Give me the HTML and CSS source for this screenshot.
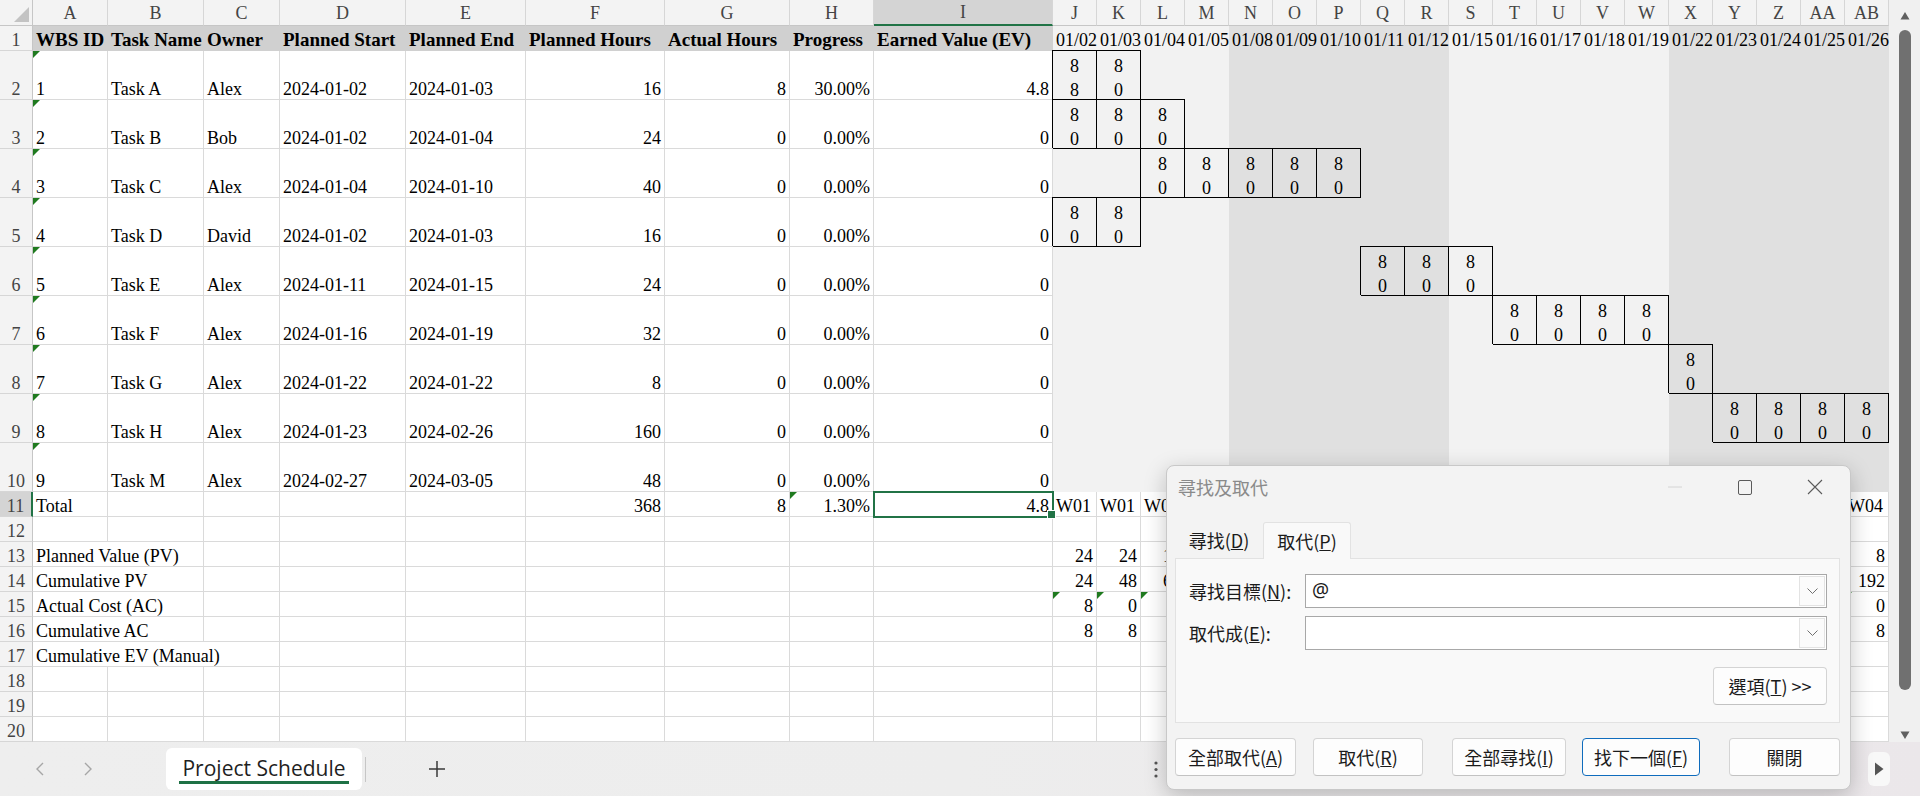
FILE: index.html
```html
<!DOCTYPE html>
<html lang="zh-Hant">
<head>
<meta charset="utf-8">
<title>Project Schedule</title>
<link rel="stylesheet" href="styles.css">
</head>
<body>
<div class="main">
  <div class="sheet">
    <!-- column headers -->
    <span class="corner"></span>
    <span class="ch">A</span><span class="ch">B</span><span class="ch">C</span><span class="ch">D</span><span class="ch">E</span><span class="ch">F</span><span class="ch">G</span><span class="ch">H</span><span class="ch sel">I</span>
    <span class="ch">J</span><span class="ch">K</span><span class="ch">L</span><span class="ch">M</span><span class="ch">N</span><span class="ch">O</span><span class="ch">P</span><span class="ch">Q</span><span class="ch">R</span><span class="ch">S</span><span class="ch">T</span><span class="ch">U</span><span class="ch">V</span><span class="ch">W</span><span class="ch">X</span><span class="ch">Y</span><span class="ch">Z</span><span class="ch">AA</span><span class="ch">AB</span>

    <!-- row 1 -->
    <span class="rh">1</span>
    <span class="hd">WBS ID</span><span class="hd">Task Name</span><span class="hd">Owner</span><span class="hd">Planned Start</span><span class="hd">Planned End</span><span class="hd">Planned Hours</span><span class="hd">Actual Hours</span><span class="hd">Progress</span><span class="hd">Earned Value (EV)</span>
    <span class="wa">01/02</span><span class="wa">01/03</span><span class="wa">01/04</span><span class="wa">01/05</span>
    <span class="wb">01/08</span><span class="wb">01/09</span><span class="wb">01/10</span><span class="wb">01/11</span><span class="wb">01/12</span>
    <span class="wa">01/15</span><span class="wa">01/16</span><span class="wa">01/17</span><span class="wa">01/18</span><span class="wa">01/19</span>
    <span class="wb">01/22</span><span class="wb">01/23</span><span class="wb">01/24</span><span class="wb">01/25</span><span class="wb">01/26</span>

    <!-- row 2 -->
    <span class="rh">2</span>
    <span class="err">1</span><span>Task A</span><span>Alex</span><span>2024-01-02</span><span>2024-01-03</span><span class="num">16</span><span class="num">8</span><span class="num">30.00%</span><span class="num">4.8</span>
    <span class="wa g"><span class="v">8<br>8</span></span><span class="wa g"><span class="v">8<br>0</span></span><span class="wa"></span><span class="wa"></span>
    <span class="wb"></span><span class="wb"></span><span class="wb"></span><span class="wb"></span><span class="wb"></span>
    <span class="wa"></span><span class="wa"></span><span class="wa"></span><span class="wa"></span><span class="wa"></span>
    <span class="wb"></span><span class="wb"></span><span class="wb"></span><span class="wb"></span><span class="wb"></span>

    <!-- row 3 -->
    <span class="rh">3</span>
    <span class="err">2</span><span>Task B</span><span>Bob</span><span>2024-01-02</span><span>2024-01-04</span><span class="num">24</span><span class="num">0</span><span class="num">0.00%</span><span class="num">0</span>
    <span class="wa g"><span class="v">8<br>0</span></span><span class="wa g"><span class="v">8<br>0</span></span><span class="wa g"><span class="v">8<br>0</span></span><span class="wa"></span>
    <span class="wb"></span><span class="wb"></span><span class="wb"></span><span class="wb"></span><span class="wb"></span>
    <span class="wa"></span><span class="wa"></span><span class="wa"></span><span class="wa"></span><span class="wa"></span>
    <span class="wb"></span><span class="wb"></span><span class="wb"></span><span class="wb"></span><span class="wb"></span>

    <!-- row 4 -->
    <span class="rh">4</span>
    <span class="err">3</span><span>Task C</span><span>Alex</span><span>2024-01-04</span><span>2024-01-10</span><span class="num">40</span><span class="num">0</span><span class="num">0.00%</span><span class="num">0</span>
    <span class="wa"></span><span class="wa"></span><span class="wa g"><span class="v">8<br>0</span></span><span class="wa g"><span class="v">8<br>0</span></span>
    <span class="wb g"><span class="v">8<br>0</span></span><span class="wb g"><span class="v">8<br>0</span></span><span class="wb g"><span class="v">8<br>0</span></span><span class="wb"></span><span class="wb"></span>
    <span class="wa"></span><span class="wa"></span><span class="wa"></span><span class="wa"></span><span class="wa"></span>
    <span class="wb"></span><span class="wb"></span><span class="wb"></span><span class="wb"></span><span class="wb"></span>

    <!-- row 5 -->
    <span class="rh">5</span>
    <span class="err">4</span><span>Task D</span><span>David</span><span>2024-01-02</span><span>2024-01-03</span><span class="num">16</span><span class="num">0</span><span class="num">0.00%</span><span class="num">0</span>
    <span class="wa g"><span class="v">8<br>0</span></span><span class="wa g"><span class="v">8<br>0</span></span><span class="wa"></span><span class="wa"></span>
    <span class="wb"></span><span class="wb"></span><span class="wb"></span><span class="wb"></span><span class="wb"></span>
    <span class="wa"></span><span class="wa"></span><span class="wa"></span><span class="wa"></span><span class="wa"></span>
    <span class="wb"></span><span class="wb"></span><span class="wb"></span><span class="wb"></span><span class="wb"></span>

    <!-- row 6 -->
    <span class="rh">6</span>
    <span class="err">5</span><span>Task E</span><span>Alex</span><span>2024-01-11</span><span>2024-01-15</span><span class="num">24</span><span class="num">0</span><span class="num">0.00%</span><span class="num">0</span>
    <span class="wa"></span><span class="wa"></span><span class="wa"></span><span class="wa"></span>
    <span class="wb"></span><span class="wb"></span><span class="wb"></span><span class="wb g"><span class="v">8<br>0</span></span><span class="wb g"><span class="v">8<br>0</span></span>
    <span class="wa g"><span class="v">8<br>0</span></span><span class="wa"></span><span class="wa"></span><span class="wa"></span><span class="wa"></span>
    <span class="wb"></span><span class="wb"></span><span class="wb"></span><span class="wb"></span><span class="wb"></span>

    <!-- row 7 -->
    <span class="rh">7</span>
    <span class="err">6</span><span>Task F</span><span>Alex</span><span>2024-01-16</span><span>2024-01-19</span><span class="num">32</span><span class="num">0</span><span class="num">0.00%</span><span class="num">0</span>
    <span class="wa"></span><span class="wa"></span><span class="wa"></span><span class="wa"></span>
    <span class="wb"></span><span class="wb"></span><span class="wb"></span><span class="wb"></span><span class="wb"></span>
    <span class="wa"></span><span class="wa g"><span class="v">8<br>0</span></span><span class="wa g"><span class="v">8<br>0</span></span><span class="wa g"><span class="v">8<br>0</span></span><span class="wa g"><span class="v">8<br>0</span></span>
    <span class="wb"></span><span class="wb"></span><span class="wb"></span><span class="wb"></span><span class="wb"></span>

    <!-- row 8 -->
    <span class="rh">8</span>
    <span class="err">7</span><span>Task G</span><span>Alex</span><span>2024-01-22</span><span>2024-01-22</span><span class="num">8</span><span class="num">0</span><span class="num">0.00%</span><span class="num">0</span>
    <span class="wa"></span><span class="wa"></span><span class="wa"></span><span class="wa"></span>
    <span class="wb"></span><span class="wb"></span><span class="wb"></span><span class="wb"></span><span class="wb"></span>
    <span class="wa"></span><span class="wa"></span><span class="wa"></span><span class="wa"></span><span class="wa"></span>
    <span class="wb g"><span class="v">8<br>0</span></span><span class="wb"></span><span class="wb"></span><span class="wb"></span><span class="wb"></span>

    <!-- row 9 -->
    <span class="rh">9</span>
    <span class="err">8</span><span>Task H</span><span>Alex</span><span>2024-01-23</span><span>2024-02-26</span><span class="num">160</span><span class="num">0</span><span class="num">0.00%</span><span class="num">0</span>
    <span class="wa"></span><span class="wa"></span><span class="wa"></span><span class="wa"></span>
    <span class="wb"></span><span class="wb"></span><span class="wb"></span><span class="wb"></span><span class="wb"></span>
    <span class="wa"></span><span class="wa"></span><span class="wa"></span><span class="wa"></span><span class="wa"></span>
    <span class="wb"></span><span class="wb g"><span class="v">8<br>0</span></span><span class="wb g"><span class="v">8<br>0</span></span><span class="wb g"><span class="v">8<br>0</span></span><span class="wb g"><span class="v">8<br>0</span></span>

    <!-- row 10 -->
    <span class="rh">10</span>
    <span class="err">9</span><span>Task M</span><span>Alex</span><span>2024-02-27</span><span>2024-03-05</span><span class="num">48</span><span class="num">0</span><span class="num">0.00%</span><span class="num">0</span>
    <span class="wa"></span><span class="wa"></span><span class="wa"></span><span class="wa"></span>
    <span class="wb"></span><span class="wb"></span><span class="wb"></span><span class="wb"></span><span class="wb"></span>
    <span class="wa"></span><span class="wa"></span><span class="wa"></span><span class="wa"></span><span class="wa"></span>
    <span class="wb"></span><span class="wb"></span><span class="wb"></span><span class="wb"></span><span class="wb"></span>

    <!-- row 11 (cells M..AA lie under the dialog) -->
    <span class="rh sel">11</span>
    <span>Total</span><span></span><span></span><span></span><span></span><span class="num">368</span><span class="num">8</span><span class="num err">1.30%</span><span class="num cur">4.8</span>
    <span>W01</span><span>W01</span><span>W01</span><span></span>
    <span></span><span></span><span></span><span></span><span></span>
    <span></span><span></span><span></span><span></span><span></span>
    <span></span><span></span><span></span><span></span><span>W04</span>

    <!-- row 12 -->
    <span class="rh">12</span>
    <span></span><span></span><span></span><span></span><span></span><span></span><span></span><span></span><span></span>
    <span></span><span></span><span></span><span></span><span></span><span></span><span></span><span></span><span></span><span></span>
    <span></span><span></span><span></span><span></span><span></span><span></span><span></span><span></span><span></span>

    <!-- row 13 -->
    <span class="rh">13</span>
    <span class="s2">Planned Value (PV)</span><span></span><span></span><span></span><span></span><span></span><span></span><span></span>
    <span class="num">24</span><span class="num">24</span><span class="num">16</span><span></span><span></span><span></span><span></span><span></span><span></span><span></span>
    <span></span><span></span><span></span><span></span><span></span><span></span><span></span><span></span><span class="num">8</span>

    <!-- row 14 -->
    <span class="rh">14</span>
    <span class="s2">Cumulative PV</span><span></span><span></span><span></span><span></span><span></span><span></span><span></span>
    <span class="num">24</span><span class="num">48</span><span class="num">64</span><span></span><span></span><span></span><span></span><span></span><span></span><span></span>
    <span></span><span></span><span></span><span></span><span></span><span></span><span></span><span></span><span class="num">192</span>

    <!-- row 15 -->
    <span class="rh">15</span>
    <span class="s2">Actual Cost (AC)</span><span></span><span></span><span></span><span></span><span></span><span></span><span></span>
    <span class="num err">8</span><span class="num err">0</span><span class="num err">0</span><span class="err"></span><span class="err"></span><span class="err"></span><span class="err"></span><span class="err"></span><span class="err"></span><span class="err"></span>
    <span class="err"></span><span class="err"></span><span class="err"></span><span class="err"></span><span class="err"></span><span class="err"></span><span class="err"></span><span class="err"></span><span class="num err">0</span>

    <!-- row 16 -->
    <span class="rh">16</span>
    <span class="s2">Cumulative AC</span><span></span><span></span><span></span><span></span><span></span><span></span><span></span>
    <span class="num">8</span><span class="num">8</span><span class="num">8</span><span></span><span></span><span></span><span></span><span></span><span></span><span></span>
    <span></span><span></span><span></span><span></span><span></span><span></span><span></span><span></span><span class="num">8</span>

    <!-- row 17 -->
    <span class="rh">17</span>
    <span class="s3">Cumulative EV (Manual)</span><span></span><span></span><span></span><span></span><span></span><span></span>
    <span></span><span></span><span></span><span></span><span></span><span></span><span></span><span></span><span></span><span></span>
    <span></span><span></span><span></span><span></span><span></span><span></span><span></span><span></span><span></span>

    <!-- row 18 -->
    <span class="rh">18</span>
    <span></span><span></span><span></span><span></span><span></span><span></span><span></span><span></span><span></span>
    <span></span><span></span><span></span><span></span><span></span><span></span><span></span><span></span><span></span><span></span>
    <span></span><span></span><span></span><span></span><span></span><span></span><span></span><span></span><span></span>

    <!-- row 19 -->
    <span class="rh">19</span>
    <span></span><span></span><span></span><span></span><span></span><span></span><span></span><span></span><span></span>
    <span></span><span></span><span></span><span></span><span></span><span></span><span></span><span></span><span></span><span></span>
    <span></span><span></span><span></span><span></span><span></span><span></span><span></span><span></span><span></span>

    <!-- row 20 -->
    <span class="rh">20</span>
    <span></span><span></span><span></span><span></span><span></span><span></span><span></span><span></span><span></span>
    <span></span><span></span><span></span><span></span><span></span><span></span><span></span><span></span><span></span><span></span>
    <span></span><span></span><span></span><span></span><span></span><span></span><span></span><span></span><span></span>
  </div>

  <div class="vscroll">
    <svg class="vs-up" width="10" height="9" viewBox="0 0 10 9"><path d="M5 1 L9.5 8.5 L0.5 8.5 Z" fill="#606060"/></svg>
    <div class="vs-thumb"></div>
    <svg class="vs-down" width="10" height="9" viewBox="0 0 10 9"><path d="M0.5 0.5 L9.5 0.5 L5 8 Z" fill="#606060"/></svg>
  </div>
</div>

<div class="tabbar">
  <span class="nav prev"><svg width="10" height="14" viewBox="0 0 10 14"><path d="M8 1 L2 7 L8 13" fill="none" stroke="#a6a6a6" stroke-width="1.4"/></svg></span>
  <span class="nav next"><svg width="10" height="14" viewBox="0 0 10 14"><path d="M2 1 L8 7 L2 13" fill="none" stroke="#a6a6a6" stroke-width="1.4"/></svg></span>
  <div class="sheet-tab"><span class="tab-label">Project Schedule</span></div>
  <span class="tabsep"></span>
  <span class="add"><svg width="18" height="18" viewBox="0 0 18 18"><path d="M9 1 V17 M1 9 H17" stroke="#3a3a3a" stroke-width="1.5"/></svg></span>
  <span class="more"><svg width="4" height="17" viewBox="0 0 4 17"><circle cx="2" cy="2" r="1.6" fill="#555"/><circle cx="2" cy="8.5" r="1.6" fill="#555"/><circle cx="2" cy="15" r="1.6" fill="#555"/></svg></span>
  <span class="hs-end"><svg width="10" height="14" viewBox="0 0 10 14"><path d="M1 0.5 L9.5 7 L1 13.5 Z" fill="#555"/></svg></span>
</div>

<div class="dialog">
  <div class="dlg-title">
    <span class="dlg-name">尋找及取代</span>
    <div class="dlg-ctrls">
      <span class="ctl"><svg width="14" height="2" viewBox="0 0 14 2"><path d="M0 1 H14" stroke="#d4d4d4" stroke-width="1"/></svg></span>
      <span class="ctl"><svg width="14" height="15" viewBox="0 0 14 15"><rect x="0.5" y="0.5" width="13" height="14" rx="1.5" fill="none" stroke="#5a5a5a" stroke-width="1"/></svg></span>
      <span class="ctl"><svg width="16" height="16" viewBox="0 0 16 16"><path d="M1 1 L15 15 M15 1 L1 15" stroke="#5a5a5a" stroke-width="1.1"/></svg></span>
    </div>
  </div>
  <div class="tabs">
    <span class="tab">尋找(<u>D</u>)</span>
    <span class="tab active">取代(<u>P</u>)</span>
  </div>
  <div class="panel">
    <div class="field">
      <label class="flabel">尋找目標(<u>N</u>):</label>
      <div class="combo"><span class="val">@</span><span class="drop"><svg width="11" height="6" viewBox="0 0 11 6"><path d="M0.5 0.5 L5.5 5.5 L10.5 0.5" fill="none" stroke="#707070" stroke-width="1"/></svg></span></div>
    </div>
    <div class="field f2">
      <label class="flabel">取代成(<u>E</u>):</label>
      <div class="combo"><span class="val"></span><span class="drop"><svg width="11" height="6" viewBox="0 0 11 6"><path d="M0.5 0.5 L5.5 5.5 L10.5 0.5" fill="none" stroke="#707070" stroke-width="1"/></svg></span></div>
    </div>
    <div class="opt-row"><button class="btn opt">選項(<u>T</u>) &gt;&gt;</button></div>
  </div>
  <div class="btns">
    <button class="btn b1">全部取代(<u>A</u>)</button>
    <button class="btn b2">取代(<u>R</u>)</button>
    <button class="btn b3">全部尋找(<u>I</u>)</button>
    <button class="btn b4 primary">找下一個(<u>F</u>)</button>
    <button class="btn b5">關閉</button>
  </div>
</div>
</body>
</html>
```

FILE: styles.css
```css
* { box-sizing: border-box; }
html, body { margin: 0; padding: 0; }
body {
  width: 1920px;
  height: 796px;
  overflow: hidden;
  position: relative;
  background: #fff;
  font-family: "Liberation Serif", "Times New Roman", serif;
}

/* ---------- sheet ---------- */
.main { display: flex; height: 742px; }

.sheet {
  display: grid;
  width: 1889px;
  height: 742px;
  grid-template-columns: 33px 75px 96px 76px 126px 120px 139px 125px 84px 179px repeat(19, 44px);
  grid-template-rows: 26px 25px repeat(9, 49px) repeat(10, 25px);
  font-size: 18px;
  color: #000;
}
.sheet > span {
  display: flex;
  align-items: flex-end;
  padding: 0 3px;
  line-height: 20px;
  white-space: nowrap;
  border-right: 1px solid #dadada;
  border-bottom: 1px solid #dadada;
  position: relative;
  min-width: 0;
}
.sheet > .num { justify-content: flex-end; }
.sheet > .s2 { grid-column: span 2; }
.sheet > .s3 { grid-column: span 3; }

.sheet > .corner {
  background: #f3f3f3;
  border-right-color: #c6c6c6;
  border-bottom-color: #c6c6c6;
}
.corner::after {
  content: "";
  position: absolute;
  right: 3px;
  bottom: 3px;
  border-style: solid;
  border-width: 0 0 15px 15px;
  border-color: transparent transparent #c3c3c3 transparent;
}
.sheet > .ch {
  align-items: center;
  justify-content: center;
  background: #f3f3f3;
  color: #444;
  border-right-color: #d6d6d6;
  border-bottom-color: #c6c6c6;
  line-height: 1;
  padding: 0;
}
.sheet > .ch.sel {
  background: #d4d4d4;
  border-bottom: 2px solid #217346;
}
.sheet > .rh {
  justify-content: center;
  background: #f3f3f3;
  color: #444;
  border-right-color: #c6c6c6;
  border-bottom-color: #d6d6d6;
  padding: 0;
}
.sheet > .rh.sel {
  background: #d4d4d4;
  border-right: 2px solid #217346;
}
.sheet > .hd {
  background: #d0d0d0;
  border-color: #d0d0d0;
  font-weight: bold;
  font-size: 19px;
}
.sheet > .wa { background: #f2f2f2; border-color: #f2f2f2; }
.sheet > .wb { background: #e0e0e0; border-color: #e0e0e0; }

.sheet > .g {
  flex-direction: column;
  align-items: center;
  justify-content: flex-end;
  line-height: 24px;
  border-right-color: #000;
  border-bottom-color: #000;
  box-shadow: -1px -1px 0 #000, 0 -1px 0 #000;
}
.g .v {
  display: block;
  text-align: center;
  margin-bottom: -3px;
}

.err::before {
  content: "";
  position: absolute;
  left: 0;
  top: 0;
  border-style: solid;
  border-width: 7px 7px 0 0;
  border-color: #1f7a1f transparent transparent transparent;
}

.sheet > .cur {
  outline: 2px solid #217346;
  outline-offset: -1px;
  z-index: 2;
}
.cur::after {
  content: "";
  position: absolute;
  right: -4px;
  bottom: -3px;
  width: 7px;
  height: 7px;
  background: #217346;
  border: 1px solid #fff;
}

/* ---------- vertical scrollbar ---------- */
.vscroll {
  width: 31px;
  height: 742px;
  background: #f0f0f0;
  display: flex;
  flex-direction: column;
  align-items: center;
}
.vs-up { margin-top: 11px; flex: none; }
.vs-thumb {
  width: 12px;
  height: 660px;
  margin-top: 10px;
  background: #707070;
  border-radius: 6px;
  flex: none;
}
.vs-down { margin-top: auto; margin-bottom: 2px; flex: none; }

/* ---------- sheet tab bar ---------- */
.tabbar {
  height: 54px;
  display: flex;
  align-items: center;
  background: linear-gradient(90deg, #eeeeee 0%, #ededed 50%, #ebe7ea 100%);
  font-family: "Open Sans", "Noto Sans", sans-serif;
}
.nav {
  width: 16px;
  height: 20px;
  display: flex;
  align-items: center;
  justify-content: center;
  margin-left: 32px;
  flex: none;
}
.sheet-tab {
  margin-left: 70px;
  width: 196px;
  height: 42px;
  align-self: flex-start;
  margin-top: 6px;
  background: #fff;
  border-radius: 6px;
  display: flex;
  justify-content: center;
  align-items: flex-start;
  padding-top: 7px;
  flex: none;
}
.tab-label {
  display: block;
  font-size: 21px;
  line-height: 26px;
  color: #1f1f1f;
  padding: 0 3px;
  border-bottom: 3px solid #1e7145;
}
.tabsep {
  width: 1px;
  height: 25px;
  background: #c6c6c6;
  margin-left: 3px;
  flex: none;
}
.add {
  margin-left: 61px;
  width: 20px;
  height: 20px;
  display: flex;
  align-items: center;
  justify-content: center;
  flex: none;
}
.more {
  margin-left: 703px;
  width: 12px;
  height: 18px;
  display: flex;
  align-items: center;
  justify-content: center;
  flex: none;
}
.hs-end {
  margin-left: auto;
  margin-right: 30px;
  width: 22px;
  height: 34px;
  background: #f8f8f8;
  border-radius: 6px;
  display: flex;
  align-items: center;
  justify-content: center;
  flex: none;
}

/* ---------- find & replace dialog ---------- */
.dialog {
  position: absolute;
  left: 1166px;
  top: 465px;
  width: 685px;
  height: 325px;
  background: #f3f3f3;
  border: 1px solid #c8c8c8;
  border-radius: 8px;
  box-shadow: 0 6px 22px rgba(0, 0, 0, 0.22);
  font-family: "Noto Sans CJK TC", "Noto Sans", sans-serif;
  font-size: 18px;
  color: #1b1b1b;
  z-index: 5;
}
.dlg-title {
  display: flex;
  align-items: center;
  height: 42px;
  padding-left: 11px;
}
.dlg-name { color: #8a8a8a; }
.dlg-ctrls { margin-left: auto; display: flex; }
.ctl {
  width: 70px;
  height: 42px;
  display: flex;
  align-items: center;
  justify-content: center;
}
.tabs {
  display: flex;
  height: 36px;
  margin: 14px 0 0 8px;
}
.tab {
  width: 88px;
  display: flex;
  align-items: center;
  justify-content: center;
}
.tab.active {
  position: relative;
  z-index: 1;
  height: 37px;
  background: #f9f9f9;
  border: 1px solid #e2e2e2;
  border-bottom: none;
  border-radius: 3px 3px 0 0;
}
.panel {
  margin: 0 10px 0 8px;
  height: 165px;
  background: #f9f9f9;
  border: 1px solid #e2e2e2;
  padding-top: 15px;
}
.field {
  display: flex;
  align-items: center;
  height: 34px;
}
.field.f2 { margin-top: 8px; }
.flabel {
  width: 129px;
  padding-left: 13px;
  white-space: nowrap;
}
.combo {
  width: 522px;
  height: 34px;
  display: flex;
  background: #fff;
  border: 1px solid #a8a8a8;
}
.val {
  flex: 1;
  padding-left: 6px;
  display: flex;
  align-items: center;
  font-family: "Noto Sans", sans-serif;
  font-size: 19px;
  padding-bottom: 3px;
}
.drop {
  width: 26px;
  margin: 1px;
  border: 1px solid #e3e3e3;
  background: #fbfbfb;
  display: flex;
  align-items: center;
  justify-content: center;
}
.opt-row {
  display: flex;
  justify-content: flex-end;
  padding-right: 12px;
  margin-top: 17px;
}
.btn {
  height: 38px;
  padding: 0;
  background: #fdfdfd;
  border: 1px solid #d4d4d4;
  border-bottom-color: #c2c2c2;
  border-radius: 4px;
  font: inherit;
  color: #1b1b1b;
  display: flex;
  align-items: center;
  justify-content: center;
  white-space: nowrap;
}
.btn.opt { width: 114px; }
.btns {
  display: flex;
  margin-top: 15px;
  padding-left: 8px;
}
.b1 { width: 121px; }
.b2 { width: 110px; margin-left: 17px; }
.b3 { width: 114px; margin-left: 29px; }
.b4 { width: 118px; margin-left: 16px; }
.b5 { width: 111px; margin-left: 29px; }
.btn.primary { border-color: #0f6cbd; }
```
